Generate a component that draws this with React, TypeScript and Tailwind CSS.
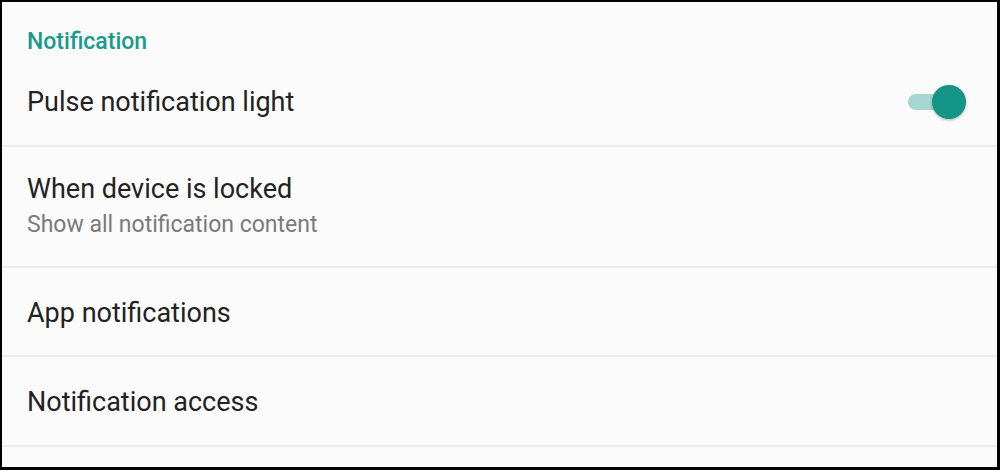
import React from "react";

function Toggle() {
  return (
    <div className="relative h-[34px] w-[58px]">
      <div className="absolute left-0 top-[9px] h-[16px] w-[46px] rounded-full bg-[#a6d6d1]" />
      <div className="absolute right-0 top-0 h-[34px] w-[34px] rounded-full bg-[#139485] shadow-[0_1px_3px_rgba(0,0,0,0.3)]" />
    </div>
  );
}

export default function App() {
  return (
    <div
      className="h-[470px] w-[1000px] overflow-hidden border-b-[3px] border-l-2 border-r-[3px] border-t-2 border-black bg-[#fbfbfb]"
      style={{ fontFamily: "Roboto, 'Noto Sans', sans-serif" }}
    >
      <div className="border-b-2 border-[#ececec]">
        <div className="mt-[25px] flex h-[30px] items-center pl-[25px] text-[23px] font-medium text-[#1a9a8b]">Notification</div>
        <div className="flex h-[88px] items-center justify-between pl-[25px] pr-[31px] pt-[2px]">
          <div className="text-[27px] leading-[32px] text-[#222222]">Pulse notification light</div>
          <Toggle />
        </div>
      </div>
      <div className="flex h-[121px] items-center border-b-2 border-[#ececec] pl-[25px] pt-[5px]">
        <div className="flex flex-col">
          <div className="text-[27px] leading-[32px] text-[#222222]">When device is locked</div>
          <div className="text-[23px] leading-[40px] text-[#7a7a7a]">Show all notification content</div>
        </div>
      </div>
      <div className="flex h-[89px] items-center border-b-2 border-[#ececec] pl-[25px] pt-[2px]">
        <div className="text-[27px] leading-[32px] text-[#222222]">App notifications</div>
      </div>
      <div className="flex h-[90px] items-center border-b-2 border-[#ececec] pl-[25px] pt-[2px]">
        <div className="text-[27px] leading-[32px] text-[#222222]">Notification access</div>
      </div>
    </div>
  );
}
